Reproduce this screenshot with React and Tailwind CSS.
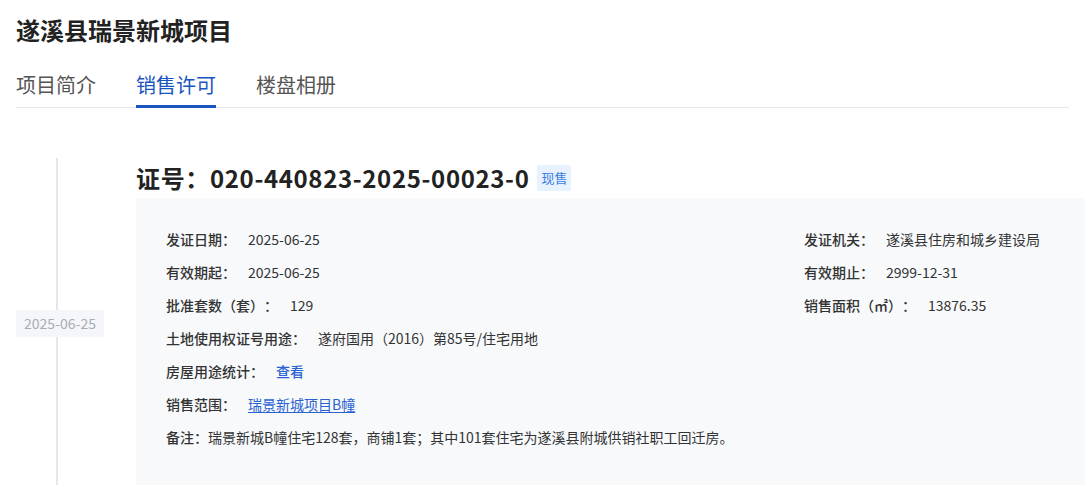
const font = { fontFamily: '"Noto Sans CJK SC", "Noto Sans", sans-serif' };

const tabs = ["项目简介", "销售许可", "楼盘相册"];

// label + value pair inside the grey panel
const Field = ({ label, children, className = "" }) => (
  <div className={`flex items-center ${className}`}>
    <span className="font-medium text-[#333]">{label}</span>
    <span className="ml-3 text-[#333]">{children}</span>
  </div>
);

export default function App() {
  return (
    <div className="min-h-screen bg-white [text-spacing-trim:space-all]" style={font}>
      {/* Title */}
      <div className="px-4 pt-[14px]">
        <h1 className="text-[24px] leading-[32px] font-bold text-[#222]">
          遂溪县瑞景新城项目
        </h1>
      </div>

      {/* Tabs */}
      <div className="mt-[25px] mx-4 border-b border-[#e5e7eb] flex gap-10">
        {tabs.map((t, i) => (
          <div
            key={t}
            className={`h-[37px] flex items-start text-[20px] leading-[28px] border-b-[3px] -mb-[1px] ${
              i === 1 ? "text-[#1a55c0] border-[#1a55c0]" : "text-[#555] border-transparent"
            }`}
          >
            {t}
          </div>
        ))}
      </div>

      {/* Timeline item */}
      <div className="mt-[50px] flex">
        {/* Timeline column */}
        <div className="w-[136px] shrink-0 flex flex-col items-start pl-4">
          <div className="ml-[40px] w-[2px] h-[152px] bg-[#e5e7eb]" />
          <div className="w-[88px] h-[27px] flex items-center justify-center bg-[#f4f6f9] text-[14px] text-[#a7adb7]">
            2025-06-25
          </div>
          <div className="ml-[40px] w-[2px] flex-1 bg-[#e5e7eb]" />
        </div>

        {/* Content */}
        <div className="flex-1 min-w-0">
          <div className="h-[40px] flex items-center">
            <h2 className="text-[24px] leading-[32px] font-bold text-[#222] tracking-[0.65px]">
              证号：020-440823-2025-00023-0
            </h2>
            <span className="ml-2 h-[26px] px-[4px] flex items-center bg-[#e8f1fe] text-[#3c7ee0] text-[13px] rounded-[2px]">
              现售
            </span>
          </div>

          <div className="bg-[#f7f9fb] pl-[30px] pr-[30px] pt-[31px] pb-[40px] text-[14px] leading-[20px] flex flex-col gap-[13px]">
            <div className="flex">
              <Field label="发证日期：" className="flex-1">2025-06-25</Field>
              <Field label="发证机关：" className="w-[251px]">遂溪县住房和城乡建设局</Field>
            </div>
            <div className="flex">
              <Field label="有效期起：" className="flex-1">2025-06-25</Field>
              <Field label="有效期止：" className="w-[251px]">2999-12-31</Field>
            </div>
            <div className="flex">
              <Field label="批准套数（套）：" className="flex-1">129</Field>
              <Field label="销售面积（㎡）：" className="w-[251px]">13876.35</Field>
            </div>
            <Field label="土地使用权证号用途：">遂府国用（2016）第85号/住宅用地</Field>
            <Field label="房屋用途统计：">
              <span className="font-medium text-[#2a62d4] cursor-pointer">查看</span>
            </Field>
            <Field label="销售范围：">
              <span className="text-[#2a62d4] underline underline-offset-2 cursor-pointer">
                瑞景新城项目B幢
              </span>
            </Field>
            <div className="flex items-center">
              <span className="font-medium text-[#333]">备注：</span>
              <span className="text-[#333]">
                瑞景新城B幢住宅128套，商铺1套；其中101套住宅为遂溪县附城供销社职工回迁房。
              </span>
            </div>
          </div>
        </div>
      </div>
    </div>
  );
}
